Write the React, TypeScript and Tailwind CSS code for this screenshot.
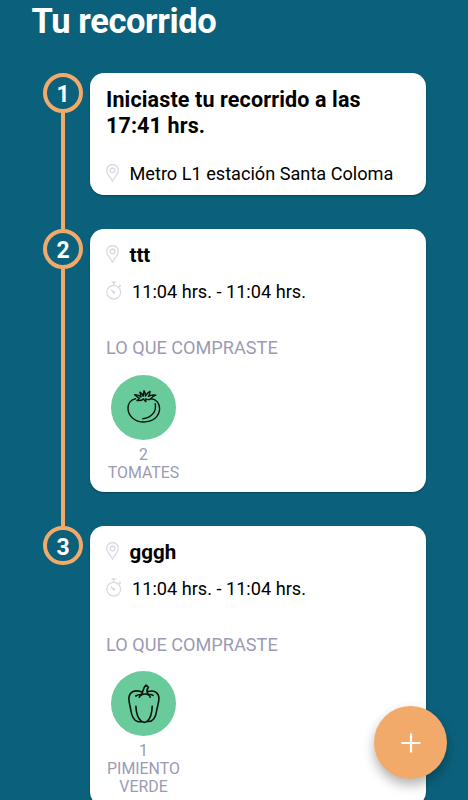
import type { ReactNode } from 'react'

interface Purchase {
  icon: ReactNode
  amount: number
  name: string
}

interface Stop {
  place: string
  schedule: string
  purchases: Purchase[]
}

function PinIcon() {
  return (
    <svg className="h-[18px] w-[13px] shrink-0" viewBox="0 0 13 18" fill="none" stroke="#d9d9e2" strokeWidth="1.3">
      <path d="M6.5 17.2C4.6 13.6 .7 9.8 .7 6.4a5.8 5.8 0 0 1 11.6 0c0 3.4-3.9 7.2-5.8 10.8z" />
      <circle cx="6.5" cy="6.4" r="2.4" />
    </svg>
  )
}

function StopwatchIcon() {
  return (
    <svg className="h-[19px] w-[16px] shrink-0" viewBox="0 0 16 19" fill="none" stroke="#d9d9e2" strokeWidth="1.3">
      <circle cx="7.7" cy="11.2" r="6.9" />
      <path d="M5.6 1h4.2M7.7 1v3.2M12.6 6.2l1.8-1.8M13.2 3.6l1.8 1.8" />
      <path d="M5 8.7l2.7 2.5" strokeWidth="1.5" />
      <circle cx="7.8" cy="11.3" r=".7" fill="#d9d9e2" />
    </svg>
  )
}

function TomatoIcon() {
  return (
    <svg className="h-[34px] w-[34px]" viewBox="0 0 34 34" fill="none" stroke="#07140e" strokeWidth="1.4" strokeLinecap="round" strokeLinejoin="round">
      <path d="M8.6 8.8C4 9.6 1 13.4 1 18.2c0 7.6 6.6 13.8 16 13.8s15.6-6 15.6-13.4c0-5.2-3.3-9.4-8.4-9.8" />
      <path d="M28.2 13.6c1.6 7.6-3.2 14.2-12.5 15.2" />
      <path d="M7.6 4.6c2.8-.1 5 .8 6.4 2.4L13 2.2c1.6.8 2.6 2.2 3.2 4L17 .7c1.1 1.6 1.5 3.3 1.4 5.4 1.3-2.2 2.8-3.8 4.7-4.6-.2 1.9-.8 3.6-1.7 4.9 2.2-1.4 4.7-1.8 7.4-1.2-2.1.8-3.7 1.9-5 3.4-1.6 1.3-3.4 1.3-5.2.3l.3 2.6c-1.2-.6-1.9-1.4-2.3-2.6-1.5 1.3-3.8 1.9-6.6 1.6 1.1-.5 1.9-1.2 2.4-2.2C10.7 7.2 9.3 6 7.6 4.6z" />
    </svg>
  )
}

function PepperIcon() {
  return (
    <svg className="h-[40px] w-[34px]" viewBox="0 0 34 40" fill="none" stroke="#07140e" strokeWidth="1.6" strokeLinecap="round" strokeLinejoin="round">
      <path d="M14.4 7.8C7.4 5.4 2.2 8 1.9 14c-.2 4 1.1 7.2 1.8 11.5.7 5.4 2.4 10.8 7 12 1.6.4 2.8.2 4-.1 1.7 1.2 3.6 1.2 5.4 0 5.6 1 8.7-3.8 9.5-10.4.6-4.2 2.4-8.5 2.3-12.7C31.7 8.2 26.8 5.8 21 7.5" />
      <path d="M8.9 22.3c.2 6.4 1.6 11.8 5.4 15M25.2 22.3c-.2 6.4-1.4 11.8-4.9 15" />
      <path d="M14.8 10.6c1.2-3.4.9-6.6 4.2-9.4l2.4 2.2c-2 2.2-1.7 4.9.1 7.4-2.2-1-4.5-1.1-6.7-.2z" />
      <path d="M14.8 10.6c-2.2-.2-4.2.1-6 1.4M14.8 10.6c-1.2.6-2 1.5-2.5 2.6M21.5 10.8c1.6-.6 3.1-.4 4.6.6M21.5 10.8c.9.6 1.5 1.4 1.7 2.3" />
    </svg>
  )
}

const stops: Stop[] = [
  {
    place: 'ttt',
    schedule: '11:04 hrs. - 11:04 hrs.',
    purchases: [{ icon: <TomatoIcon />, amount: 2, name: 'TOMATES' }],
  },
  {
    place: 'gggh',
    schedule: '11:04 hrs. - 11:04 hrs.',
    purchases: [{ icon: <PepperIcon />, amount: 1, name: 'PIMIENTO VERDE' }],
  },
]

// Numbered marker on the left, the line runs down to the next one
function Step({ number, isLast = false, children }: { number: number; isLast?: boolean; children: ReactNode }) {
  return (
    <li className="flex gap-[7.5px]">
      <div className="flex w-[39px] flex-col items-center">
        <div className="flex h-[39.4px] w-[39.4px] shrink-0 items-center justify-center rounded-full border-[4px] border-[#f2aa6b] pt-[3px] text-[23px] leading-none font-bold text-white">
          {number}
        </div>
        {!isLast && <div className="w-[4px] flex-1 bg-[#f2aa6b]" />}
      </div>
      <div className="w-[336px] pb-[34px]">
        <div className="rounded-[14px] bg-white px-[16px] shadow-[0_1px_2px_rgba(0,0,0,0.3)]">{children}</div>
      </div>
    </li>
  )
}

function StopCard({ stop }: { stop: Stop }) {
  return (
    <div className="pt-[13px] pb-[10px]">
      <div className="flex h-[25px] gap-[10.5px]">
        <div className="pt-[3px]">
          <PinIcon />
        </div>
        <h2 className="text-[20.5px] leading-[26px] font-bold">{stop.place}</h2>
      </div>
      <div className="mt-[12px] flex h-[24px] gap-[10px]">
        <div className="pt-[2px]">
          <StopwatchIcon />
        </div>
        <p className="text-[18.15px] leading-[25px]">{stop.schedule}</p>
      </div>
      <h3 className="mt-[32px] text-[18.15px] leading-[25px] text-[#9b9bb4]">LO QUE COMPRASTE</h3>
      <div className="mt-[14.5px] flex">
        {stop.purchases.map((item) => (
          <div key={item.name} className="flex w-[75px] flex-col items-center text-center text-[15.9px] leading-[18px] text-[#9b9bb4]">
            <div className="mb-[6px] flex h-[65px] w-[65px] items-center justify-center rounded-full bg-[#69cb9b]">
              {item.icon}
            </div>
            <span>{item.amount}</span>
            <span>{item.name}</span>
          </div>
        ))}
      </div>
    </div>
  )
}

export default function App() {
  return (
    <main className="relative h-[800px] w-[468px] overflow-hidden bg-[#0b617c] font-[Roboto,sans-serif] text-black">
      <h1 className="pl-[31.5px] text-[34.5px] leading-[42px] font-bold tracking-[-0.4px] text-white">Tu recorrido</h1>

      <ol className="mt-[31.4px] pl-[43.5px]">
        <Step number={1}>
          <div className="pt-[14px] pb-[10px]">
            <h2 className="text-[21.5px] leading-[26px] font-bold tracking-[0.13px]">Iniciaste tu recorrido a las 17:41 hrs.</h2>
            <div className="mt-[22px] flex h-[24px] gap-[10.5px]">
              <div className="pt-[2.5px]">
                <PinIcon />
              </div>
              <p className="text-[18.15px] leading-[25px]">Metro L1 estación Santa Coloma</p>
            </div>
          </div>
        </Step>
        {stops.map((stop, idx) => (
          <Step key={stop.place} number={idx + 2} isLast={idx === stops.length - 1}>
            <StopCard stop={stop} />
          </Step>
        ))}
      </ol>

      {/* Floating add button */}
      <button
        aria-label="Agregar"
        className="absolute top-[706px] left-[374px] flex h-[73px] w-[73px] items-center justify-center rounded-full bg-[#f2aa6b] shadow-[0_6px_12px_rgba(0,0,0,0.3)]"
      >
        <svg className="h-[20px] w-[20px]" viewBox="0 0 20 20" stroke="white" strokeWidth="2.2">
          <path d="M10 .5v19M.5 10h19" />
        </svg>
      </button>
    </main>
  )
}
